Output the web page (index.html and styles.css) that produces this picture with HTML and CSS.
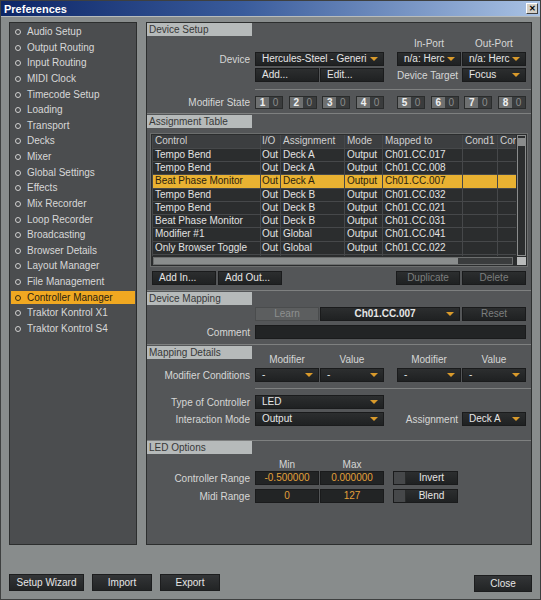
FILE: index.html
```html
<!DOCTYPE html>
<html lang="en">
<head>
  <meta charset="UTF-8" />
  <title>Preferences</title>
  <link rel="stylesheet" href="styles.css">
</head>
<body>

<div class="janela">
  <!-- Barra de título -->
  <div class="titulo">
    <span>Preferences</span>
    <div class="btn-x">&#x2715;</div>
  </div>

  <div class="conteudo">
    <!-- Menu lateral -->
    <ul class="menu">
      <li><i></i>Audio Setup</li>
      <li><i></i>Output Routing</li>
      <li><i></i>Input Routing</li>
      <li><i></i>MIDI Clock</li>
      <li><i></i>Timecode Setup</li>
      <li><i></i>Loading</li>
      <li><i></i>Transport</li>
      <li><i></i>Decks</li>
      <li><i></i>Mixer</li>
      <li><i></i>Global Settings</li>
      <li><i></i>Effects</li>
      <li><i></i>Mix Recorder</li>
      <li><i></i>Loop Recorder</li>
      <li><i></i>Broadcasting</li>
      <li><i></i>Browser Details</li>
      <li><i></i>Layout Manager</li>
      <li><i></i>File Management</li>
      <li class="ativo"><i></i>Controller Manager</li>
      <li><i></i>Traktor Kontrol X1</li>
      <li><i></i>Traktor Kontrol S4</li>
    </ul>

    <div class="painel">
      <!-- Device Setup -->
      <section class="secao secao-device">
        <h2 class="cabecalho">Device Setup</h2>
        <div class="linha linha-rotulos">
          <span class="c5 centro">In-Port</span>
          <span class="c6 centro">Out-Port</span>
        </div>
        <div class="linha">
          <label>Device</label>
          <div class="combo c23">Hercules-Steel - Generi</div>
          <div class="combo c5">n/a: Herc</div>
          <div class="combo c6">n/a: Herc</div>
        </div>
        <div class="linha">
          <div class="botao c2">Add...</div>
          <div class="botao c3">Edit...</div>
          <span class="c5 direita">Device Target</span>
          <div class="combo c6">Focus</div>
        </div>
        <div class="separador"></div>
        <div class="linha linha-mod">
          <label>Modifier State</label>
          <div class="mods c23">
            <div class="mod"><b>1</b><span>0</span></div>
            <div class="mod"><b>2</b><span>0</span></div>
            <div class="mod"><b>3</b><span>0</span></div>
            <div class="mod"><b>4</b><span>0</span></div>
          </div>
          <div class="mods c56">
            <div class="mod"><b>5</b><span>0</span></div>
            <div class="mod"><b>6</b><span>0</span></div>
            <div class="mod"><b>7</b><span>0</span></div>
            <div class="mod"><b>8</b><span>0</span></div>
          </div>
        </div>
      </section>

      <!-- Assignment Table -->
      <section class="secao secao-tabela">
        <h2 class="cabecalho">Assignment Table</h2>
        <div class="tabela-box">
          <div class="tabela-area">
            <table class="tabela">
              <colgroup>
                <col style="width:108px"><col style="width:20px"><col style="width:64px"><col style="width:38px"><col style="width:80px"><col style="width:35px"><col style="width:19px">
              </colgroup>
              <thead>
                <tr><th>Control</th><th>I/O</th><th>Assignment</th><th>Mode</th><th>Mapped to</th><th>Cond1</th><th>Con</th></tr>
              </thead>
              <tbody>
                <tr><td>Tempo Bend</td><td>Out</td><td>Deck A</td><td>Output</td><td>Ch01.CC.017</td><td></td><td></td></tr>
                <tr><td>Tempo Bend</td><td>Out</td><td>Deck A</td><td>Output</td><td>Ch01.CC.008</td><td></td><td></td></tr>
                <tr class="selecionada"><td>Beat Phase Monitor</td><td>Out</td><td>Deck A</td><td>Output</td><td>Ch01.CC.007</td><td></td><td></td></tr>
                <tr><td>Tempo Bend</td><td>Out</td><td>Deck B</td><td>Output</td><td>Ch01.CC.032</td><td></td><td></td></tr>
                <tr><td>Tempo Bend</td><td>Out</td><td>Deck B</td><td>Output</td><td>Ch01.CC.021</td><td></td><td></td></tr>
                <tr><td>Beat Phase Monitor</td><td>Out</td><td>Deck B</td><td>Output</td><td>Ch01.CC.031</td><td></td><td></td></tr>
                <tr><td>Modifier #1</td><td>Out</td><td>Global</td><td>Output</td><td>Ch01.CC.041</td><td></td><td></td></tr>
                <tr><td>Only Browser Toggle</td><td>Out</td><td>Global</td><td>Output</td><td>Ch01.CC.022</td><td></td><td></td></tr>
                <tr><td>Tempo Bend</td><td>Out</td><td>Deck B</td><td>Output</td><td>Ch01.CC.044</td><td></td><td></td></tr>
              </tbody>
            </table>
          </div>
          <div class="vscroll"><div class="vscroll-thumb"></div></div>
          <div class="hscroll"><div class="hscroll-thumb"></div></div>
          <div class="canto"></div>
        </div>
        <div class="linha-botoes">
          <div class="botao">Add In...</div>
          <div class="botao">Add Out...</div>
          <div class="botao inativo empurra">Duplicate</div>
          <div class="botao inativo">Delete</div>
        </div>
      </section>

      <!-- Device Mapping -->
      <section class="secao secao-mapping">
        <h2 class="cabecalho">Device Mapping</h2>
        <div class="linha">
          <div class="botao botao-learn c2">Learn</div>
          <div class="combo combo-forte c3-5">Ch01.CC.007</div>
          <div class="botao inativo c6">Reset</div>
        </div>
        <div class="linha linha-comentario">
          <label>Comment</label>
          <div class="campo c2-6"></div>
        </div>
      </section>

      <!-- Mapping Details -->
      <section class="secao secao-detalhes">
        <h2 class="cabecalho">Mapping Details</h2>
        <div class="linha linha-rotulos linha-sobe">
          <span class="c2 centro">Modifier</span>
          <span class="c3 centro">Value</span>
          <span class="c5 centro">Modifier</span>
          <span class="c6 centro">Value</span>
        </div>
        <div class="linha">
          <label>Modifier Conditions</label>
          <div class="combo c2">-</div>
          <div class="combo c3">-</div>
          <div class="combo c5">-</div>
          <div class="combo c6">-</div>
        </div>
        <div class="separador"></div>
        <div class="linha linha-tipo">
          <label>Type of Controller</label>
          <div class="combo c23">LED</div>
        </div>
        <div class="linha linha-modo">
          <label>Interaction Mode</label>
          <div class="combo c23">Output</div>
          <span class="c5 direita">Assignment</span>
          <div class="combo c6">Deck A</div>
        </div>
      </section>

      <!-- LED Options -->
      <section class="secao secao-led">
        <h2 class="cabecalho">LED Options</h2>
        <div class="linha linha-rotulos linha-minmax">
          <span class="c2 centro">Min</span>
          <span class="c3 centro">Max</span>
        </div>
        <div class="linha">
          <label>Controller Range</label>
          <div class="campo valor c2">-0.500000</div>
          <div class="campo valor c3">0.000000</div>
          <div class="check c5"><i></i><span>Invert</span></div>
        </div>
        <div class="linha linha-midi">
          <label>Midi Range</label>
          <div class="campo valor c2">0</div>
          <div class="campo valor c3">127</div>
          <div class="check c5"><i></i><span>Blend</span></div>
        </div>
      </section>
    </div>
  </div>

  <!-- Botões de baixo -->
  <div class="rodape">
    <div class="botao botao-rodape largo">Setup Wizard</div>
    <div class="botao botao-rodape">Import</div>
    <div class="botao botao-rodape">Export</div>
    <div class="botao botao-rodape fechar">Close</div>
  </div>
</div>

</body>
</html>
```

FILE: styles.css
```css
/* Reset básico e fonte padrão */
* {
  margin: 0;
  padding: 0;
  box-sizing: border-box;
}

body {
  font-family: 'Liberation Sans', Arial, sans-serif;
  font-size: 10px;
  background: #878b8b;
  color: #d6d6d6;
}

.janela {
  width: 541px;
  height: 600px;
  border: 1px solid #3e4040;
  background: #888c8c;
  display: flex;
  flex-direction: column;
}

/* Barra de título */
.titulo {
  height: 16px;
  background: linear-gradient(90deg, #0c2566 0%, #3a5c9c 45%, #a9c2e4 100%);
  border-bottom: 1px solid #b8bcbc;
  display: flex;
  align-items: center;
  padding-left: 3px;
  color: #fff;
  font-weight: bold;
  font-size: 11px;
}

.btn-x {
  margin-left: auto;
  margin-right: 2px;
  width: 12px;
  height: 11px;
  background: #d4d0c8;
  border: 1px solid;
  border-color: #fff #404040 #404040 #fff;
  color: #000;
  font-size: 8px;
  line-height: 9px;
  text-align: center;
}

.conteudo {
  display: flex;
  gap: 9px;
  padding: 5px 0 0 8px;
}

/* Menu lateral */
.menu {
  list-style: none;
  width: 128px;
  height: 523px;
  background: #4b4d4f;
  border: 1px solid #2c2e2e;
  padding: 2px 0 0 1px;
}

.menu li {
  height: 13px;
  line-height: 13px;
  margin: 0 1px 2.63px 0;
  padding-left: 16px;
  position: relative;
  color: #d8d8d8;
  white-space: nowrap;
}

.menu li i {
  position: absolute;
  left: 4px;
  top: 4px;
  width: 6px;
  height: 6px;
  border: 1.5px solid #d0d0d0;
  border-radius: 50%;
}

.menu li.ativo {
  background: #f0a821;
  color: #2a2210;
}

.menu li.ativo i {
  border-color: #3a2e10;
}

/* Painel da direita */
.painel {
  width: 386px;
  height: 523px;
  background: #545658;
  border: 1px solid #2c2e2e;
  display: flex;
  flex-direction: column;
}

.secao {
  border-top: 1px solid #7e8080;
}

.secao-device {
  height: 90px;
  border-top: none;
}

.secao-tabela { height: 177px; }
.secao-mapping { height: 54px; }
.secao-detalhes { height: 96px; }
.secao-led { flex: 1; }

.cabecalho {
  width: 105px;
  height: 13px;
  line-height: 13px;
  background: #b6baba;
  color: #363838;
  font-size: 10px;
  font-weight: normal;
  padding-left: 2px;
  margin-top: 1px;
}

.secao-device .cabecalho,
.secao-led .cabecalho {
  margin-top: 0;
}

/* Linhas de formulário */
.linha {
  display: grid;
  grid-template-columns: 107px 64px 64px 11px 64px 64px;
  column-gap: 1px;
  height: 14px;
  align-items: center;
  margin-top: 2px;
}

.linha label {
  grid-column: 1;
  text-align: right;
  padding-right: 4px;
  white-space: nowrap;
}

.linha-rotulos {
  height: 12px;
  line-height: 12px;
}

.linha-sobe { margin-top: -5px; }
.linha-comentario { margin-top: 4px; }
.linha-tipo { margin-top: 6px; }
.linha-modo { margin-top: 3px; }
.linha-minmax { margin-top: 5px; }
.secao-led .linha-minmax + .linha { margin-top: 0; }
.linha-midi { margin-top: 4px; }
.linha-mod { height: 13px; margin-top: 6px; }

.c2 { grid-column: 2; }
.c3 { grid-column: 3; }
.c5 { grid-column: 5; }
.c6 { grid-column: 6; }
.c23 { grid-column: 2 / 4; }
.c56 { grid-column: 5 / 7; }
.c3-5 { grid-column: 3 / 6; }
.c2-6 { grid-column: 2 / 7; }

.centro { text-align: center; }
.direita { text-align: right; white-space: nowrap; padding-right: 3px; }

.separador {
  height: 1px;
  margin: 7px 0 0 108px;
  background: #7e8080;
}

.secao-detalhes .separador {
  margin-top: 6px;
}

/* Combos e botões */
.combo, .botao, .campo {
  height: 14px;
  line-height: 14px;
  background: linear-gradient(#2c2e2f, #1f2122);
  border: 1px solid #1a1b1c;
  color: #e6e6e6;
  white-space: nowrap;
}

.combo {
  position: relative;
  padding: 0 16px 0 6px;
  line-height: 12px;
}

.combo::after {
  content: '';
  position: absolute;
  right: 5px;
  top: 4px;
  border-left: 4px solid transparent;
  border-right: 4px solid transparent;
  border-top: 4px solid #d99a2b;
}

.combo-forte {
  text-align: center;
  font-weight: bold;
  margin-right: 1px;
}

.botao {
  padding-left: 6px;
  line-height: 12px;
}

.botao.inativo {
  color: #7c7e7e;
  text-align: center;
  padding-left: 0;
}

.botao-learn {
  background: #5c5e5f;
  border-color: #4a4c4d;
  color: #8e9090;
  text-align: center;
  padding-left: 0;
}

.campo {
  background: #222425;
}

.valor {
  color: #e3a03a;
  text-align: center;
  line-height: 12px;
}

.check {
  display: flex;
  height: 14px;
  width: 65px;
  margin-left: -4px;
  background: linear-gradient(#2c2e2f, #1f2122);
  border: 1px solid #1a1b1c;
}

.check i {
  width: 12px;
  background: #46484a;
  border-right: 1px solid #2a2c2c;
}

.check span {
  flex: 1;
  text-align: center;
  line-height: 12px;
  color: #e6e6e6;
}

/* Modifier State */
.mods {
  display: flex;
  justify-content: space-between;
  height: 13px;
}

.mod {
  width: 28px;
  display: flex;
  background: #3a3c3d;
  border: 1px solid #2a2c2c;
}

.mod b, .mod span {
  width: 13px;
  text-align: center;
  line-height: 11px;
}

.mod b {
  background: #6e7070;
  color: #f0f0f0;
}

.mod span {
  color: #8a8c8c;
}

/* Tabela de assignments */
.tabela-box {
  width: 378px;
  height: 134px;
  margin: 5px 0 0 3px;
  border: 1px solid #6c6e6e;
  background: #2b2d2e;
  padding: 1px;
  display: grid;
  grid-template-columns: 364px 10px;
  grid-template-rows: 121px 9px;
}

.tabela-area {
  overflow: hidden;
}

.tabela {
  width: 364px;
  table-layout: fixed;
  border-collapse: collapse;
}

.tabela th, .tabela td {
  height: 13.25px;
  padding: 0 0 0 2px;
  text-align: left;
  font-weight: normal;
  white-space: nowrap;
  overflow: hidden;
  border: 1px solid #46484a;
  line-height: 12px;
}

.tabela th {
  background: #3c3e40;
  color: #d0d0d0;
  border-top: none;
}

.tabela td {
  color: #e2e2e2;
}

.tabela td:nth-child(2),
.tabela th:nth-child(2) {
  padding-left: 1px;
}

.tabela tr.selecionada td {
  background: #e9b232;
  color: #2a2210;
}

.vscroll {
  border: 1px solid #8a8c8c;
  background: #2b2d2e;
  margin-left: 1px;
}

.vscroll-thumb {
  height: 8px;
  margin-top: 2px;
  background: #8a8c8c;
}

.hscroll {
  border: 1px solid #6c6e6e;
  background: #3a3c3d;
  margin: 1px 3px 0 1px;
}

.hscroll-thumb {
  width: 304px;
  height: 100%;
  background: #8a8d8d;
}

.canto {
  background: #b8baba;
  margin: 1px 0 0 1px;
}

.linha-botoes {
  display: flex;
  gap: 2px;
  padding: 0 5px;
  margin-top: 4px;
}

.linha-botoes .botao {
  width: 64px;
}

.linha-botoes .empurra {
  margin-left: auto;
}

/* Rodapé */
.rodape {
  display: flex;
  gap: 8px;
  padding: 0 8px;
  margin-top: 29px;
}

.botao-rodape {
  width: 60px;
  height: 17px;
  line-height: 15px;
  padding-left: 0;
  text-align: center;
  background: linear-gradient(#333537, #222425);
  border-color: #1c1d1e;
}

.botao-rodape.largo {
  width: 75px;
}

.botao-rodape.fechar {
  width: 58px;
  margin-left: auto;
  margin-top: 1px;
}
```
